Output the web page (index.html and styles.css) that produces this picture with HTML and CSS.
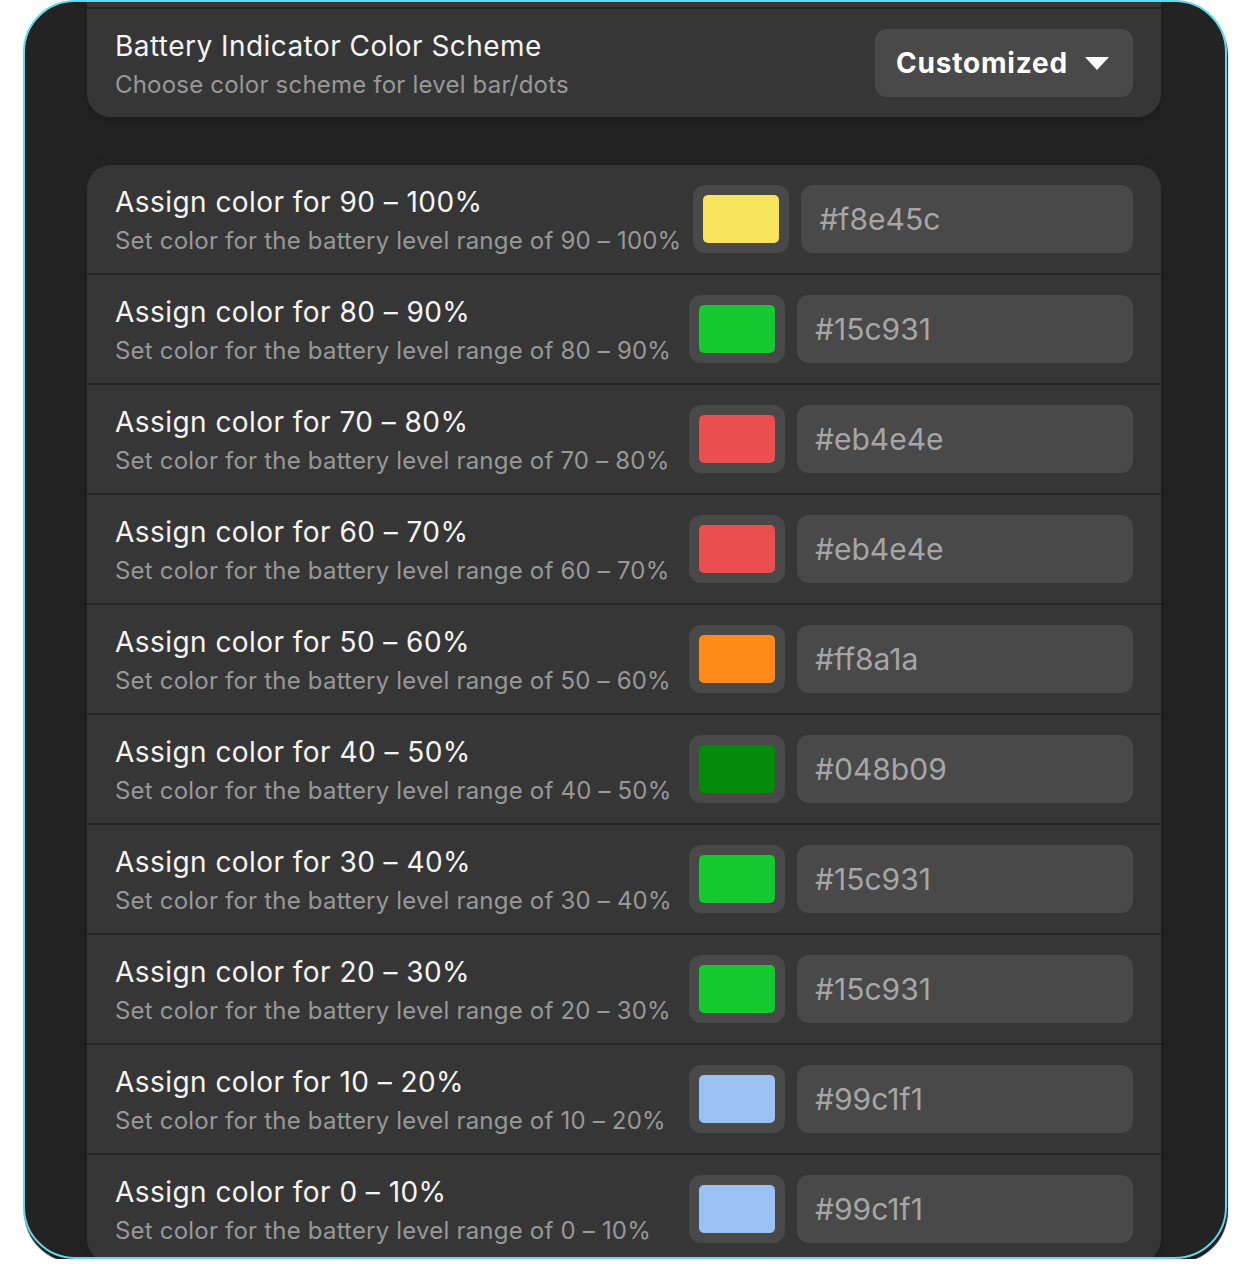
FILE: index.html
```html
<!DOCTYPE html>
<html lang="en">
<head>
<meta charset="utf-8">
<title>Battery Indicator Color Scheme</title>
<link rel="stylesheet" href="styles.css">
</head>
<body>
<div class="frame">
  <div class="content">
    <section class="card card-top">
      <div class="stub"></div>
      <div class="row">
        <div class="text">
          <div class="title">Battery Indicator Color Scheme</div>
          <div class="sub">Choose color scheme for level bar/dots</div>
        </div>
        <button class="dropdown">
          <span>Customized</span>
          <svg class="caret" width="24" height="13" viewBox="0 0 24 13"><path d="M0 0H24L12 13Z" fill="#fff"/></svg>
        </button>
      </div>
    </section>

    <section class="card card-list">
      <div class="row">
        <div class="text"><div class="title">Assign color for 90 – 100%</div><div class="sub">Set color for the battery level range of 90 – 100%</div></div>
        <div class="swatch"><div class="chip" style="background:#f8e45c"></div></div>
        <div class="hex">#f8e45c</div>
      </div>
      <div class="row">
        <div class="text"><div class="title">Assign color for 80 – 90%</div><div class="sub">Set color for the battery level range of 80 – 90%</div></div>
        <div class="swatch"><div class="chip" style="background:#15c931"></div></div>
        <div class="hex">#15c931</div>
      </div>
      <div class="row">
        <div class="text"><div class="title">Assign color for 70 – 80%</div><div class="sub">Set color for the battery level range of 70 – 80%</div></div>
        <div class="swatch"><div class="chip" style="background:#eb4e4e"></div></div>
        <div class="hex">#eb4e4e</div>
      </div>
      <div class="row">
        <div class="text"><div class="title">Assign color for 60 – 70%</div><div class="sub">Set color for the battery level range of 60 – 70%</div></div>
        <div class="swatch"><div class="chip" style="background:#eb4e4e"></div></div>
        <div class="hex">#eb4e4e</div>
      </div>
      <div class="row">
        <div class="text"><div class="title">Assign color for 50 – 60%</div><div class="sub">Set color for the battery level range of 50 – 60%</div></div>
        <div class="swatch"><div class="chip" style="background:#ff8a1a"></div></div>
        <div class="hex">#ff8a1a</div>
      </div>
      <div class="row">
        <div class="text"><div class="title">Assign color for 40 – 50%</div><div class="sub">Set color for the battery level range of 40 – 50%</div></div>
        <div class="swatch"><div class="chip" style="background:#048b09"></div></div>
        <div class="hex">#048b09</div>
      </div>
      <div class="row">
        <div class="text"><div class="title">Assign color for 30 – 40%</div><div class="sub">Set color for the battery level range of 30 – 40%</div></div>
        <div class="swatch"><div class="chip" style="background:#15c931"></div></div>
        <div class="hex">#15c931</div>
      </div>
      <div class="row">
        <div class="text"><div class="title">Assign color for 20 – 30%</div><div class="sub">Set color for the battery level range of 20 – 30%</div></div>
        <div class="swatch"><div class="chip" style="background:#15c931"></div></div>
        <div class="hex">#15c931</div>
      </div>
      <div class="row">
        <div class="text"><div class="title">Assign color for 10 – 20%</div><div class="sub">Set color for the battery level range of 10 – 20%</div></div>
        <div class="swatch"><div class="chip" style="background:#99c1f1"></div></div>
        <div class="hex">#99c1f1</div>
      </div>
      <div class="row">
        <div class="text"><div class="title">Assign color for 0 – 10%</div><div class="sub">Set color for the battery level range of 0 – 10%</div></div>
        <div class="swatch"><div class="chip" style="background:#99c1f1"></div></div>
        <div class="hex">#99c1f1</div>
      </div>
    </section>
  </div>
</div>
</body>
</html>
```

FILE: styles.css
```css
html, body {
  margin: 0;
  padding: 0;
  background: #ffffff;
}

body {
  font-family: Inter, "Noto Sans", "Liberation Sans", sans-serif;
  -webkit-font-smoothing: antialiased;
}

.frame {
  box-sizing: border-box;
  margin-left: 23px;
  width: 1204px;
  height: 1259px;
  border: 2px solid #5fd9ef;
  border-radius: 52px;
  background: #232323;
  overflow: hidden;
  box-shadow: 1px 4px 1px #1b1b1b;
}

.content {
  padding: 0 64px 0 62px;
}

.card {
  background: #262626;
  box-shadow: 0 4px 14px rgba(0, 0, 0, 0.22);
  display: flex;
  flex-direction: column;
  gap: 2px;
}

.card > .stub,
.card > .row {
  background: #363636;
}

.card-top {
  border-radius: 0 0 24px 24px;
}

.card-top > .row {
  border-radius: 0 0 24px 24px;
}

.stub {
  height: 5px;
}

.card-list {
  margin-top: 48px;
  border-radius: 24px;
  overflow: hidden;
}

.row {
  box-sizing: border-box;
  height: 108px;
  padding: 0 28px;
  display: flex;
  align-items: center;
  gap: 12px;
}

.text {
  flex: 0 0 auto;
  min-width: 562px;
  padding-top: 4px;
}

.card-top .text {
  flex: 1 1 auto;
}

.title {
  font-size: 28px;
  line-height: 36px;
  letter-spacing: 0.45px;
  color: #f4f4f4;
  white-space: nowrap;
}

.sub {
  margin-top: 3px;
  font-size: 24px;
  line-height: 36px;
  letter-spacing: 0.2px;
  color: #989898;
  white-space: nowrap;
}

.dropdown {
  box-sizing: border-box;
  height: 68px;
  width: 258px;
  border: none;
  border-radius: 12px;
  background: #494949;
  color: #ffffff;
  font-family: Inter, "Noto Sans", "Liberation Sans", sans-serif;
  font-size: 28px;
  font-weight: 700;
  letter-spacing: 0.8px;
  padding: 0 24px 0 21px;
  display: flex;
  align-items: center;
  justify-content: space-between;
}

.caret {
  display: block;
}

.swatch {
  box-sizing: border-box;
  flex: 0 0 96px;
  height: 68px;
  padding: 10px;
  border-radius: 12px;
  background: #494949;
}

.chip {
  width: 76px;
  height: 48px;
  border-radius: 5px;
}

.hex {
  flex: 1 1 auto;
  box-sizing: border-box;
  height: 68px;
  border-radius: 12px;
  background: #494949;
  padding: 0 18px;
  display: flex;
  align-items: center;
  font-size: 30px;
  color: #a6a6a6;
}
```
